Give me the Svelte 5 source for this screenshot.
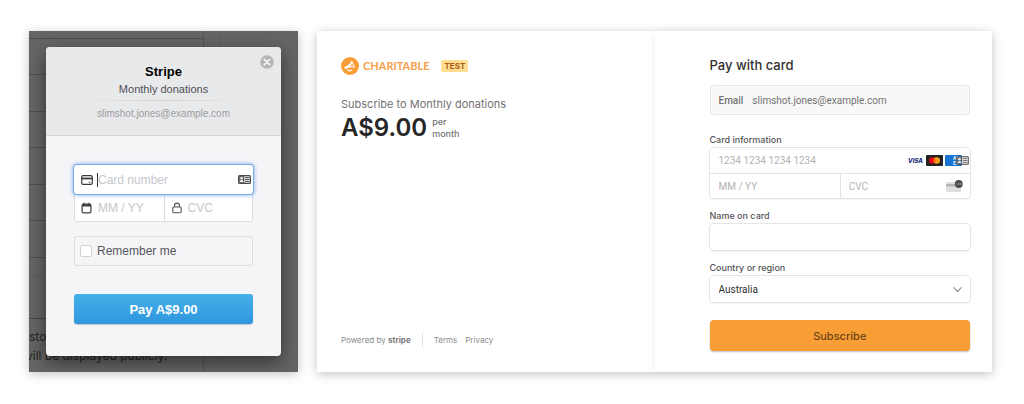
<script lang="ts">
	let cardNumber = $state('');
	let expiry = $state('');
	let cvc = $state('');
	let remember = $state(false);
	let name = $state('');
	let country = $state('Australia');

	const fieldRows = [1, 2, 3, 4, 5, 6];
</script>

{#snippet contactCard()}
	<svg class="contact" viewBox="0 0 13 9" aria-hidden="true">
		<rect x="0.6" y="0.6" width="11.8" height="7.8" rx="1" fill="#e4e4e4" stroke="#4c4c4c" stroke-width="1.2" />
		<rect x="1.2" y="1.2" width="5" height="6.6" fill="#555" />
		<circle cx="3.6" cy="3.3" r="1.2" fill="#fff" />
		<path d="M1.8 7c0-2.6 3.6-2.6 3.6 0z" fill="#fff" />
		<path d="M7 2.6h4.4M7 4.5h4.4M7 6.4h4.4" stroke="#555" stroke-width="1" />
	</svg>
{/snippet}

<main class="page">
	<section class="legacy">
		<div class="behind" aria-hidden="true">
			<div class="behind-form">
				<div class="behind-top"></div>
				{#each fieldRows as row (row)}
					<div class="behind-row"></div>
				{/each}
				<div class="behind-gap"></div>
				<div class="behind-last"></div>
				<p>sto</p>
				<p class="behind-note">vill be displayed publicly.</p>
			</div>
			<div class="behind-side"></div>
		</div>

		<form class="modal" onsubmit={(e) => e.preventDefault()}>
			<header class="modal-header">
				<button class="close" type="button" aria-label="Close">
					<svg viewBox="0 0 14 14" aria-hidden="true">
						<circle cx="7" cy="7" r="6.8" fill="#b5b6b8" />
						<path d="M4.4 4.4l5.2 5.2M9.6 4.4l-5.2 5.2" stroke="#f3f3f4" stroke-width="1.9" stroke-linecap="round" />
					</svg>
				</button>
				<h1>Stripe</h1>
				<h2>Monthly donations</h2>
				<div class="rule"></div>
				<p>slimshot.jones@example.com</p>
			</header>
			<div class="modal-body">
				<div class="fields">
					<label class="field number">
						<svg class="icon" viewBox="0 0 12 12" aria-hidden="true">
							<rect x="0.7" y="1.7" width="10.6" height="8.6" rx="1.4" fill="none" stroke="#3d3d40" stroke-width="1.2" />
							<path d="M1 4.5h10" stroke="#3d3d40" stroke-width="1.8" />
							<path d="M7.8 8.3h1.6" stroke="#3d3d40" stroke-width="1" />
						</svg>
						<span class="caret"></span>
						<input aria-label="Card number" placeholder="Card number" bind:value={cardNumber} />
						{@render contactCard()}
					</label>
					<label class="field">
						<svg class="icon" viewBox="0 0 12 12" aria-hidden="true">
							<rect x="1.1" y="2.1" width="8.8" height="8.8" rx="1.3" fill="none" stroke="#3d3d40" stroke-width="1.2" />
							<path d="M1 3.4h9" stroke="#3d3d40" stroke-width="2.2" />
							<path d="M3 0.8v2M8 0.8v2" stroke="#3d3d40" stroke-width="1.3" />
						</svg>
						<input aria-label="Expiry" placeholder="MM / YY" bind:value={expiry} />
					</label>
					<label class="field cvc">
						<svg class="icon" viewBox="0 0 12 12" aria-hidden="true">
							<rect x="1.8" y="5" width="8.4" height="5.8" rx="1.2" fill="none" stroke="#55555a" stroke-width="1.1" />
							<path d="M3.5 5V3.6a2.5 2.5 0 0 1 5 0V5" fill="none" stroke="#55555a" stroke-width="1.1" />
						</svg>
						<input aria-label="CVC" placeholder="CVC" bind:value={cvc} />
					</label>
				</div>
				<label class="remember">
					<input type="checkbox" bind:checked={remember} />
					Remember me
				</label>
				<button class="pay">Pay A$9.00</button>
			</div>
		</form>
	</section>

	<section class="checkout">
		<div class="summary">
			<div class="brand">
				<svg class="logo" viewBox="0 0 18 18" aria-hidden="true">
					<circle cx="9" cy="9" r="9" fill="#f89c35" />
					<path d="M10.8 3.200L14.400 10.900C11.500 9.900 8.600 10.300 4.200 12.200L3.200 9.900C7.200 8.300 9.900 6.500 10.800 3.200z" fill="#fff" />
					<path d="M10.900 5.800L12.700 9.600C11.500 9.300 10.300 9.300 9 9.500 10.200 8.500 10.900 7.300 10.900 5.800z" fill="#f89c35" />
					<path d="M6.200 12.400c1 1.900 3.700 2 5 0" fill="none" stroke="#fff" stroke-width="1.1" />
				</svg>
				<span class="wordmark">CHARITABLE</span>
				<span class="test">TEST</span>
			</div>
			<p class="product">Subscribe to Monthly donations</p>
			<div class="price">
				<strong>A$9.00</strong>
				<span>per<br />month</span>
			</div>
			<footer>
				<span>Powered by <b>stripe</b></span>
				<nav>
					<a href="#terms">Terms</a>
					<a href="#privacy">Privacy</a>
				</nav>
			</footer>
		</div>

		<form class="payment" onsubmit={(e) => e.preventDefault()}>
			<h2>Pay with card</h2>
			<div class="email">
				<span class="email-label">Email</span>
				<span>slimshot.jones@example.com</span>
			</div>

			<label class="caption" for="card">Card information</label>
			<div class="card-box">
				<div class="card-row">
					<input id="card" placeholder="1234 1234 1234 1234" bind:value={cardNumber} />
					<div class="brands">
						<svg viewBox="0 0 17 11" aria-label="Visa">
							<rect x="0.25" y="0.25" width="16.5" height="10.5" rx="1" fill="#fff" stroke="#ededed" stroke-width="0.5" />
							<text x="8.5" y="7.8" text-anchor="middle" fill="#222a7a" class="visa">VISA</text>
						</svg>
						<svg viewBox="0 0 17 11" aria-label="Mastercard">
							<rect width="17" height="11" rx="1" fill="#222" />
							<circle cx="6.3" cy="5.5" r="3.3" fill="#eb001b" />
							<circle cx="10.7" cy="5.5" r="3.3" fill="#f79e1b" />
							<path d="M8.5 3.04a3.3 3.3 0 0 1 0 4.92 3.3 3.3 0 0 1 0-4.92z" fill="#ff5f00" />
						</svg>
						<svg viewBox="0 0 17 11" aria-label="American Express">
							<rect width="17" height="11" rx="1" fill="#1673d1" />
							<text x="8" y="5.300" fill="#e8f2fb" class="amex">AM</text>
							<text x="8" y="9.600" fill="#e8f2fb" class="amex">EX</text>
						</svg>
						<span class="autofill">{@render contactCard()}</span>
					</div>
				</div>
				<div class="card-row split">
					<input aria-label="Expiry" placeholder="MM / YY" bind:value={expiry} />
					<div class="security">
						<input aria-label="CVC" placeholder="CVC" bind:value={cvc} />
						<svg viewBox="0 0 17 12" aria-hidden="true">
							<rect x="0" y="2" width="15" height="10" rx="1" fill="#dedede" />
							<rect x="0" y="4" width="15" height="2.500" fill="#b4b4b4" />
							<circle cx="12.800" cy="4" r="3.900" fill="#484848" />
							<path d="M10.800 3.300v1.500M12.200 3.200h1v1.600h-1M14.200 3.200h.9v1.600h-.9" fill="none" stroke="#bbb" stroke-width="0.6" />
						</svg>
					</div>
				</div>
			</div>

			<label class="caption" for="name">Name on card</label>
			<input id="name" class="control" bind:value={name} />

			<label class="caption" for="country">Country or region</label>
			<div class="select">
				<select id="country" class="control" bind:value={country}>
					<option>Australia</option>
					<option>New Zealand</option>
				</select>
				<svg viewBox="0 0 8 8" aria-hidden="true">
					<path d="M0.700 2.300L4 5.700l3.300-3.400" fill="none" stroke="#8b8b8b" stroke-width="1" stroke-linecap="round" />
				</svg>
			</div>

			<button class="subscribe">Subscribe</button>
		</form>
	</section>
</main>

<style>
	:global(body) {
		margin: 0;
		background: #fff;
	}

	* {
		box-sizing: border-box;
	}

	h1,
	h2,
	p {
		margin: 0;
	}

	input,
	select,
	button {
		font: inherit;
		min-width: 0;
		border: 0;
		padding: 0;
		background: none;
		outline: none;
	}

	svg {
		display: block;
		flex: none;
	}

	.page {
		display: grid;
		grid-template-columns: minmax(0, 269fr) minmax(0, 675fr);
		gap: 19px;
		padding: 31px 32px 31px 29px;
	}

	.legacy {
		position: relative;
		overflow: hidden;
		padding: 16px 17px;
		background: #656565;
		font-family: 'Liberation Sans', Arial, sans-serif;
	}

	.legacy,
	.checkout {
		box-shadow: 0 2px 10px rgba(0, 0, 0, 0.24);
	}

	/* dimmed page under the modal */
	.behind {
		position: absolute;
		inset: 0;
		display: flex;
		gap: 16px;
		font-family: Inter, sans-serif;
		font-size: 12px;
		line-height: 19px;
		white-space: nowrap;
		color: #242424;
	}

	.behind-form {
		width: 175px;
		border-right: 1px solid #565656;
	}

	.behind-top {
		height: 8px;
		border-bottom: 1px solid #4b4b4b;
	}

	.behind-row {
		height: 37px;
		border-bottom: 1px solid #505050;
	}

	.behind-row:nth-child(even) {
		height: 36px;
	}

	.behind-gap {
		height: 19px;
		border-bottom: 1px solid #5e5e5e;
	}

	.behind-last {
		height: 42px;
		margin-bottom: 8px;
		border-bottom: 1px solid #484848;
	}

	.behind-note {
		margin-left: -3px;
	}

	.behind-side {
		flex: 1;
		border-left: 1px solid #606060;
	}

	.modal {
		position: relative;
		border-radius: 4px;
		background: #f5f5f7;
		box-shadow: 0 6px 18px rgba(0, 0, 0, 0.5);
	}

	.modal-header {
		height: 89px;
		padding-top: 16px;
		border-bottom: 1px solid #d5d5d8;
		border-radius: 4px 4px 0 0;
		background: #e8e9eb;
		text-align: center;
	}

	.close {
		position: absolute;
		top: 8px;
		right: 7px;
		width: 14px;
		height: 14px;
		cursor: pointer;
	}

	h1 {
		font-size: 13px;
		line-height: 18px;
		color: #000;
	}

	.modal-header h2 {
		font-size: 11px;
		font-weight: 400;
		line-height: 16px;
		color: #4f5056;
	}

	.rule {
		height: 1px;
		margin: 3px 32px 6px;
		background: linear-gradient(90deg, transparent, #d2d3d5, transparent);
	}

	.modal-header p {
		font-size: 10px;
		line-height: 14px;
		color: #9b9c9f;
	}

	.modal-body {
		padding: 29px 28px 32px;
	}

	.fields {
		display: grid;
		grid-template-columns: minmax(0, 1fr) minmax(0, 1fr);
		border: 1px solid #dcdcdf;
		border-radius: 3px;
		background: #fff;
	}

	.field {
		display: flex;
		align-items: center;
		height: 27px;
		padding-left: 6px;
		font-size: 12px;
	}

	.field.number {
		position: relative;
		grid-column: 1 / -1;
		height: 29px;
		margin: -1px -1px 0;
		padding: 0 2px 0 7px;
		border-radius: 3px;
		background: #fff;
		box-shadow: 0 0 0 1px #7ba9e2, 0 0 4px 1px #79aaf0;
	}

	.field.cvc {
		border-left: 1px solid #dcdcdf;
	}

	.field input {
		flex: 1;
		margin-left: 5px;
		color: #333;
	}

	.number input {
		margin-left: 0;
	}

	.field input::placeholder {
		color: #c6c7cc;
		opacity: 1;
	}

	.icon {
		width: 12px;
		height: 12px;
	}

	.caret {
		width: 1px;
		height: 14px;
		margin-left: 4px;
		background: #333;
	}

	.field.number input {
		margin-left: 0;
	}

	.contact {
		width: 13px;
		height: 9px;
	}

	.remember {
		display: flex;
		align-items: center;
		gap: 5px;
		height: 30px;
		margin: 14px 0 28px;
		padding-left: 5px;
		border: 1px solid #dcdcdf;
		border-radius: 3px;
		font-size: 12px;
		color: #55565c;
	}

	.remember input {
		appearance: none;
		width: 12px;
		height: 12px;
		margin: 0;
		border: 1px solid #d3d3d7;
		border-radius: 2px;
		background: #fff;
	}

	.remember input:checked {
		background: #3498db;
	}

	.pay {
		width: 100%;
		height: 30px;
		border-radius: 3px;
		background: linear-gradient(#43b0e9, #3096de);
		box-shadow: 0 1px 1px rgba(0, 0, 0, 0.2);
		font-size: 13px;
		font-weight: 700;
		color: #fff;
		cursor: pointer;
	}

	.checkout {
		display: grid;
		grid-template-columns: minmax(0, 1fr) minmax(0, 1fr);
		background: #fff;
		font-family: Inter, sans-serif;
		font-size: 10px;
		color: #737373;
	}

	.summary {
		display: flex;
		flex-direction: column;
		padding: 25px 24px;
	}

	.brand {
		display: flex;
		align-items: center;
		height: 19px;
	}

	.logo {
		width: 18px;
		height: 18px;
	}

	.wordmark {
		margin: 0 12px 0 4px;
		font-family: Lato, sans-serif;
		font-size: 11px;
		font-weight: 700;
		color: #f6a04b;
	}

	.test {
		padding: 0 3px;
		border-radius: 2px;
		background: #ffde92;
		font-size: 8px;
		font-weight: 700;
		line-height: 12px;
		color: #ad5a16;
	}

	.product {
		margin-top: 21px;
		font-size: 11px;
		line-height: 16px;
	}

	.price {
		display: flex;
		align-items: center;
		gap: 5px;
		height: 32px;
		font-size: 9px;
		font-weight: 500;
		line-height: 12px;
	}

	.price strong {
		font-size: 24px;
		font-weight: 600;
		color: #262626;
	}

	footer {
		display: flex;
		align-items: center;
		margin-top: auto;
		font-size: 8px;
		line-height: 14px;
		color: #8b8b8b;
	}

	footer b {
		color: #7b7b7b;
	}

	nav {
		display: flex;
		gap: 8px;
		margin-left: 11px;
		padding-left: 11px;
		border-left: 1px solid #dedede;
	}

	a {
		color: inherit;
		text-decoration: none;
	}

	.payment {
		padding: 24px 22px 21px 55px;
		box-shadow: -4px 0 8px -4px rgba(0, 0, 0, 0.09);
	}

	.payment h2 {
		margin-bottom: 10px;
		font-size: 13px;
		font-weight: 500;
		line-height: 20px;
		color: #303030;
	}

	.email,
	.card-box,
	.control {
		font-family: Roboto, sans-serif;
	}

	.email {
		display: flex;
		align-items: center;
		gap: 9px;
		height: 30px;
		padding: 0 8px;
		border: 1px solid #e7e7e7;
		border-radius: 3px;
		background: #f8f8f8;
	}

	.email-label {
		font-weight: 500;
	}

	.caption {
		display: block;
		margin: 11px 0 1px;
		font-size: 9px;
		font-weight: 500;
		line-height: 14px;
		color: #555;
	}

	.email + .caption {
		margin-top: 18px;
	}

	.card-box,
	.control {
		width: 100%;
		border-radius: 4px;
		background: #fff;
		box-shadow: 0 0 0 1px #e4e4e4, 0 1px 2px rgba(0, 0, 0, 0.16);
	}

	.card-row {
		display: flex;
		align-items: center;
		height: 25px;
		padding: 0 1px 0 9px;
	}

	.card-row input {
		flex: 1;
		height: 24px;
		color: #333;
	}

	.card-row input::placeholder {
		color: #b2b2b2;
		opacity: 1;
	}

	.card-row.split {
		display: grid;
		grid-template-columns: minmax(0, 1fr) minmax(0, 1fr);
		padding: 0;
		border-top: 1px solid #e4e4e4;
	}

	.card-row.split > input {
		padding-left: 9px;
	}

	.security {
		display: flex;
		align-items: center;
		padding: 0 7px 0 8px;
		border-left: 1px solid #e4e4e4;
	}

	.security svg {
		width: 17px;
		height: 12px;
	}

	.brands {
		position: relative;
		display: flex;
		gap: 2px;
		padding-right: 7px;
	}

	.brands > svg {
		width: 17px;
		height: 11px;
	}

	.autofill {
		position: absolute;
		top: 1px;
		right: 0;
		opacity: 0.8;
	}

	.visa {
		font-family: Inter, sans-serif;
		font-size: 6px;
		font-style: italic;
		font-weight: 800;
	}

	.amex {
		font-size: 5px;
		font-weight: 700;
	}

	.control {
		display: block;
		height: 26px;
		padding: 0 9px;
		color: #303030;
	}

	.select {
		position: relative;
	}

	.select select {
		appearance: none;
	}

	.select svg {
		position: absolute;
		top: 9px;
		right: 8px;
		width: 9px;
		height: 9px;
		pointer-events: none;
	}

	.subscribe {
		width: 100%;
		height: 31px;
		margin-top: 18px;
		border-radius: 4px;
		background: #f99d35;
		box-shadow: 0 1px 2px rgba(0, 0, 0, 0.25);
		font-size: 11px;
		font-weight: 500;
		color: #6d4516;
		cursor: pointer;
	}
</style>
